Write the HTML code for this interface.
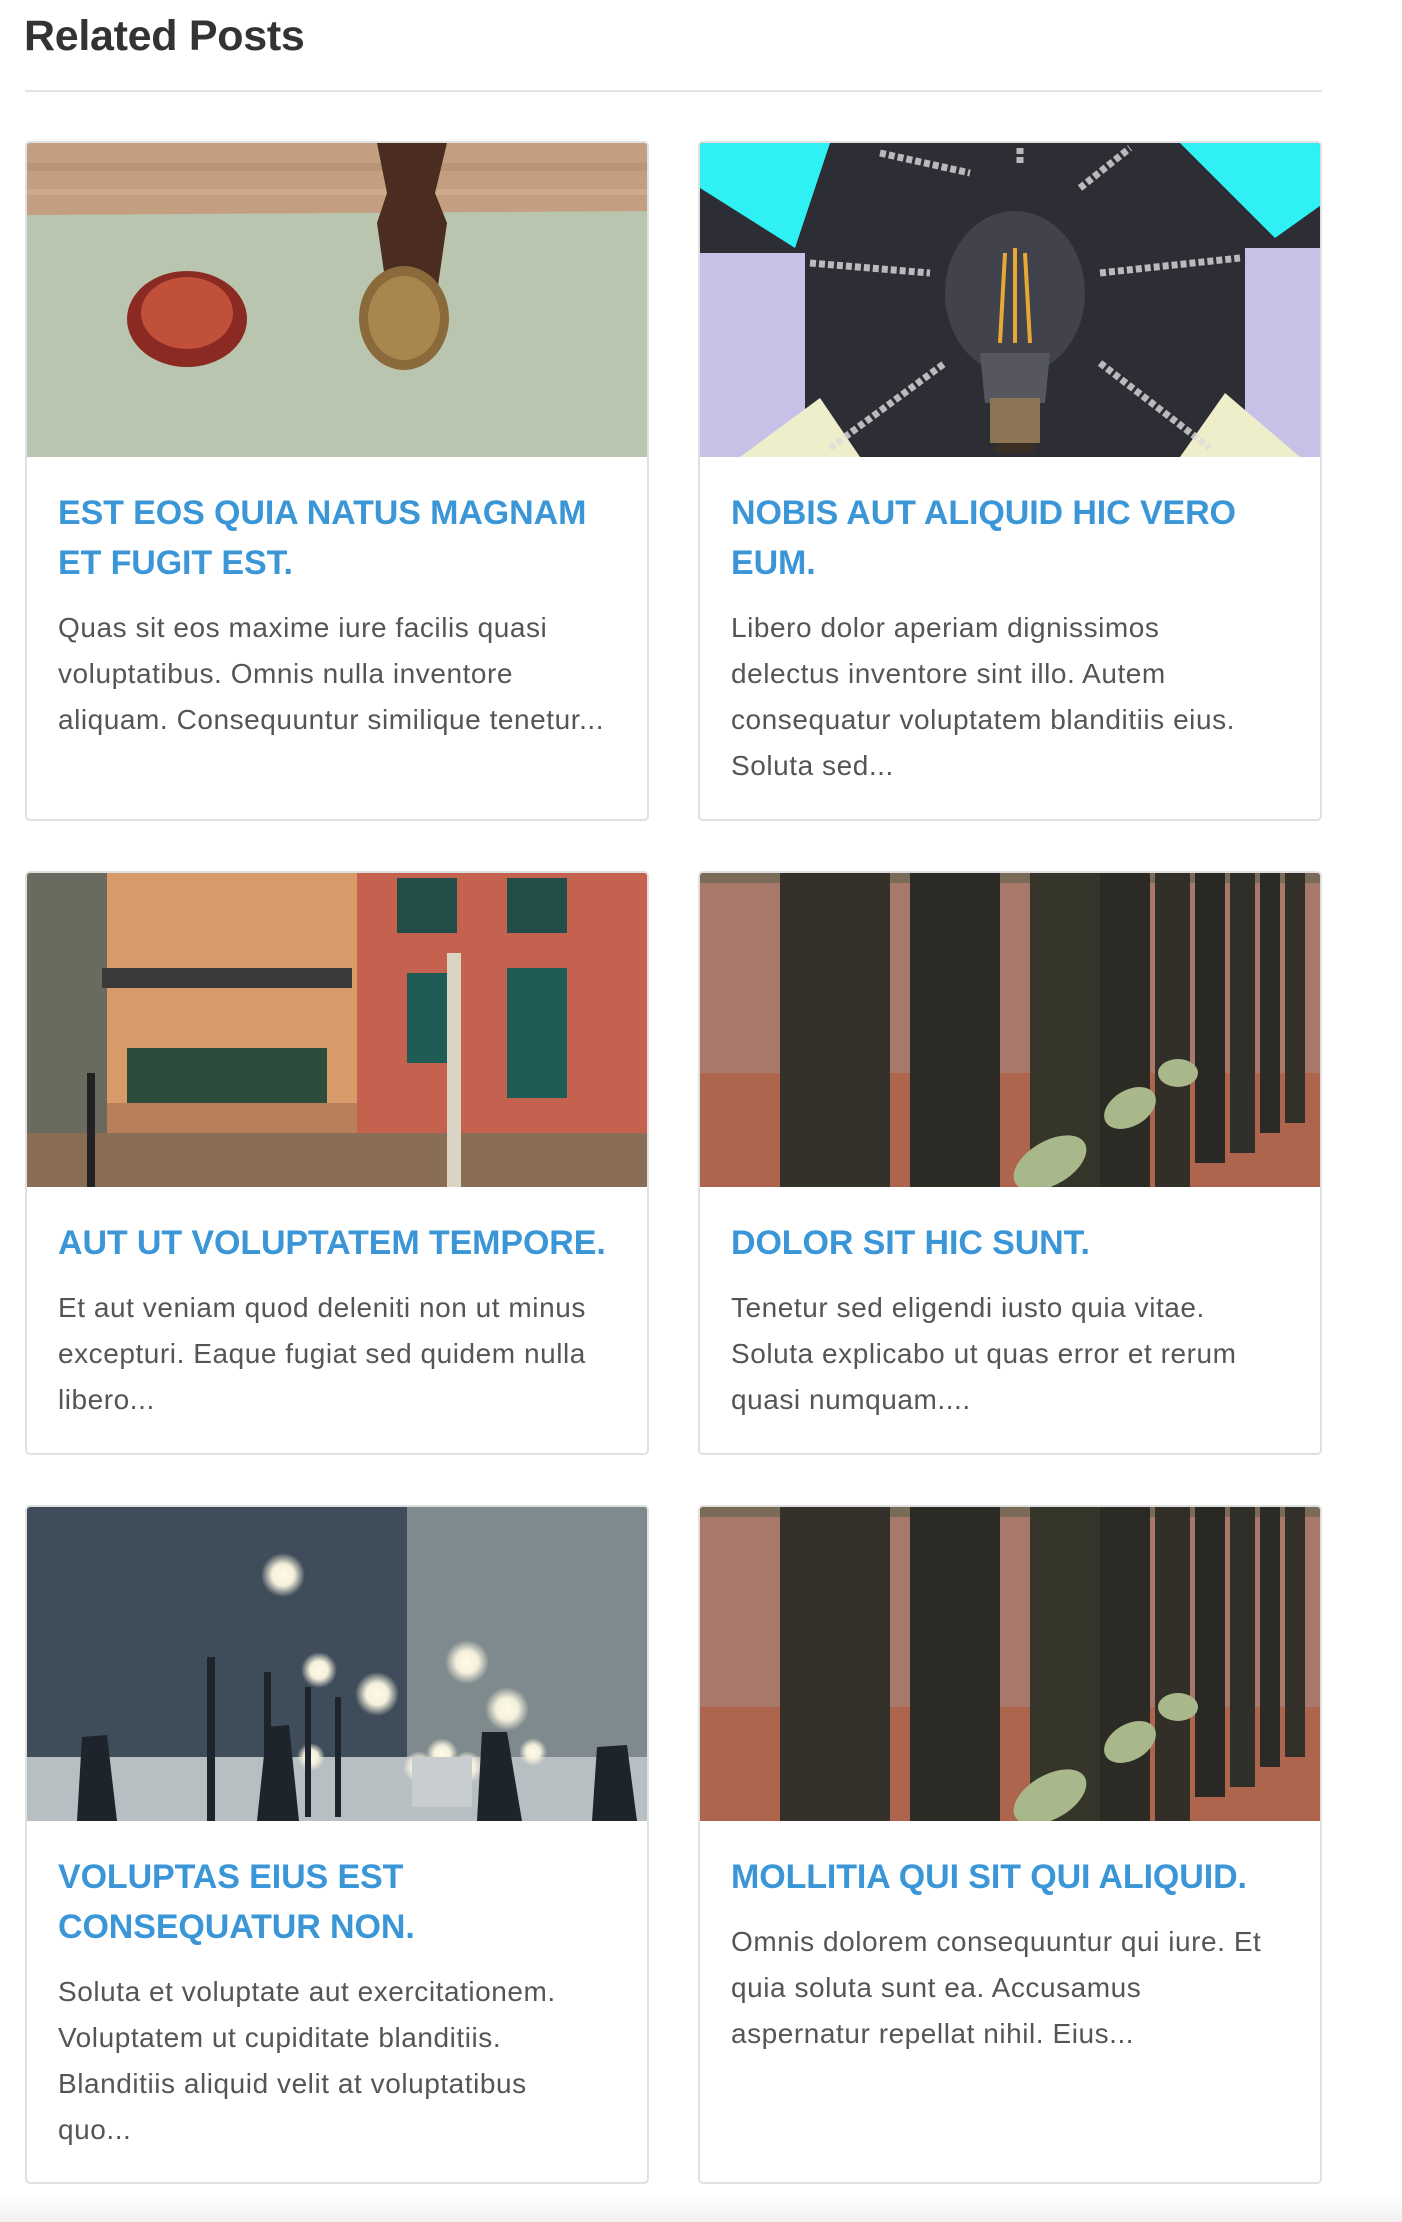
<!DOCTYPE html>
<html><head><meta charset="utf-8"><style>
*{box-sizing:border-box;margin:0;padding:0}
body{width:1402px;height:2222px;background:#fff;font-family:"Liberation Sans",sans-serif;position:relative;overflow:hidden}
h2{position:absolute;left:24px;top:12px;font-size:43px;font-weight:bold;color:#333;letter-spacing:-0.3px}
.hr{position:absolute;left:25px;top:90px;width:1297px;height:2px;background:#e3e3e3}
.card{position:absolute;width:624px;border:2px solid #e0e0e0;border-radius:5px;overflow:hidden;background:#fff}
.img{height:314px;position:relative;overflow:hidden}
.body{padding:31px 20px 30px 31px}
.t{color:#3a96d6;font-size:34px;font-weight:bold;line-height:50px;text-transform:uppercase;margin-bottom:17px;letter-spacing:-0.1px}
.p{color:#555;font-size:28px;line-height:46px;letter-spacing:0.55px;white-space:nowrap}
.foot{position:absolute;left:0;top:2195px;width:1402px;height:27px;background:linear-gradient(#fff,#f0f0f0)}
</style></head><body>
<h2>Related Posts</h2>
<div class="hr"></div>

<div class="card" style="left:25px;top:141px;height:680px">
<div class="img"><svg width="624" height="314">
<rect width="624" height="314" fill="#b8c3aa"/>
<rect width="624" height="72" fill="#c49e80"/>
<rect y="20" width="624" height="8" fill="#b08a6c" opacity=".5"/><rect y="46" width="624" height="6" fill="#d5b092" opacity=".6"/>
<path d="M0 72 L624 68 L624 314 L0 314Z" fill="#b9c5ae"/>
<ellipse cx="160" cy="176" rx="60" ry="48" fill="#8a2a22"/><ellipse cx="160" cy="170" rx="46" ry="36" fill="#c0503a"/>
<path d="M350 0 L420 0 L408 50 L420 80 L410 150 L360 150 L350 80 L360 50Z" fill="#4a2c20"/>
<ellipse cx="377" cy="175" rx="45" ry="52" fill="#8a6a3a"/><ellipse cx="377" cy="175" rx="36" ry="42" fill="#a9864d"/>
</svg></div>
<div class="body"><div class="t">Est eos quia natus magnam<br>et fugit est.</div>
<div class="p">Quas sit eos maxime iure facilis quasi<br>voluptatibus. Omnis nulla inventore<br>aliquam. Consequuntur similique tenetur...</div></div></div>

<div class="card" style="left:698px;top:141px;height:680px">
<div class="img"><svg width="624" height="314">
<rect width="624" height="314" fill="#2d2e35"/>
<path d="M0 0 L130 0 L95 105 L0 45Z" fill="#2ff0f2"/><path d="M480 0 L624 0 L624 60 L575 95Z" fill="#2ff0f2"/>
<rect x="0" y="110" width="105" height="210" fill="#c7c1e8"/><rect x="545" y="105" width="79" height="210" fill="#c7c1e8"/>
<path d="M40 314 L120 255 L160 314Z" fill="#efeecb"/><path d="M480 314 L525 250 L600 314Z" fill="#efeecb"/>
<g stroke="#ddd" stroke-width="7" stroke-dasharray="6 3" opacity=".8">
<line x1="110" y1="120" x2="230" y2="130"/><line x1="400" y1="130" x2="540" y2="115"/>
<line x1="130" y1="305" x2="245" y2="220"/><line x1="400" y1="220" x2="510" y2="305"/>
<line x1="180" y1="10" x2="270" y2="30"/><line x1="380" y1="45" x2="430" y2="5"/><line x1="320" y1="5" x2="320" y2="20"/>
</g>
<ellipse cx="315" cy="150" rx="70" ry="82" fill="#4a4b55" opacity=".7"/>
<path d="M280 210 L350 210 L345 260 L285 260Z" fill="#55565e"/>
<g stroke="#e7a933" stroke-width="4"><line x1="305" y1="110" x2="300" y2="200"/><line x1="315" y1="105" x2="315" y2="200"/><line x1="325" y1="110" x2="330" y2="200"/></g>
<rect x="290" y="255" width="50" height="45" fill="#8c7455"/><rect x="295" y="300" width="40" height="10" fill="#3a2e25"/>
</svg></div>
<div class="body"><div class="t">Nobis aut aliquid hic vero<br>eum.</div>
<div class="p">Libero dolor aperiam dignissimos<br>delectus inventore sint illo. Autem<br>consequatur voluptatem blanditiis eius.<br>Soluta sed...</div></div></div>

<div class="card" style="left:25px;top:871px;height:584px">
<div class="img"><svg width="624" height="314">
<rect width="624" height="314" fill="#c98b5d"/>
<rect x="0" width="80" height="314" fill="#6b6a5e"/>
<rect x="80" width="250" height="314" fill="#d89a68"/>
<rect x="330" width="294" height="314" fill="#c5624f"/>
<rect x="75" y="95" width="250" height="20" fill="#3a3a38"/>
<rect x="100" y="175" width="200" height="60" fill="#2c4c3c"/>
<rect x="370" y="5" width="60" height="55" fill="#224d48"/><rect x="480" y="5" width="60" height="55" fill="#224d48"/>
<rect x="380" y="100" width="40" height="90" fill="#1f5c55"/><rect x="480" y="95" width="60" height="130" fill="#1f5c55"/>
<rect x="80" y="230" width="250" height="30" fill="#b8805a"/>
<rect x="0" y="260" width="624" height="54" fill="#8a6d55"/>
<rect x="420" y="80" width="14" height="234" fill="#d9d4c4"/><rect x="60" y="200" width="8" height="114" fill="#222"/>
</svg></div>
<div class="body"><div class="t">Aut ut voluptatem tempore.</div>
<div class="p">Et aut veniam quod deleniti non ut minus<br>excepturi. Eaque fugiat sed quidem nulla<br>libero...</div></div></div>

<div class="card" style="left:698px;top:871px;height:584px">
<div class="img"><svg width="624" height="314">
<rect width="624" height="314" fill="#a8786a"/>
<rect y="200" width="624" height="114" fill="#b0583c" opacity=".6"/>
<rect width="624" height="10" fill="#7a6a58"/>
<rect x="80" width="110" height="314" fill="#34312a"/><rect x="210" width="90" height="314" fill="#2c2a25"/>
<rect x="330" width="70" height="314" fill="#35352a"/><rect x="400" width="50" height="314" fill="#2b2a24"/>
<rect x="455" width="35" height="314" fill="#312f28"/><rect x="495" width="30" height="290" fill="#2a2824"/><rect x="530" width="25" height="280" fill="#302e28"/><rect x="560" width="20" height="260" fill="#2b2a26"/><rect x="585" width="20" height="250" fill="#33302a"/>
<ellipse cx="350" cy="290" rx="40" ry="22" fill="#a9b88a" transform="rotate(-30 350 290)"/>
<ellipse cx="430" cy="235" rx="28" ry="18" fill="#a9b88a" transform="rotate(-30 430 235)"/>
<ellipse cx="478" cy="200" rx="20" ry="14" fill="#a9b88a"/>
</svg></div>
<div class="body"><div class="t">Dolor sit hic sunt.</div>
<div class="p">Tenetur sed eligendi iusto quia vitae.<br>Soluta explicabo ut quas error et rerum<br>quasi numquam....</div></div></div>

<div class="card" style="left:25px;top:1505px;height:679px">
<div class="img"><svg width="624" height="314">
<defs><radialGradient id="l"><stop offset="0" stop-color="#fffbe8"/><stop offset=".5" stop-color="#f4f0dc"/><stop offset="1" stop-color="#f4f0dc" stop-opacity="0"/></radialGradient></defs>
<rect width="624" height="314" fill="#3f4c5a"/>
<rect x="380" width="244" height="260" fill="#7e8a8d"/>
<rect y="250" width="624" height="64" fill="#b7bfc2"/>
<g fill="url(#l)"><circle cx="256" cy="68" r="22"/><circle cx="292" cy="163" r="18"/><circle cx="350" cy="187" r="22"/><circle cx="440" cy="155" r="22"/><circle cx="480" cy="202" r="22"/><circle cx="392" cy="260" r="16"/><circle cx="415" cy="247" r="16"/><circle cx="440" cy="260" r="16"/><circle cx="506" cy="245" r="14"/><circle cx="284" cy="250" r="14"/></g>
<rect x="385" y="250" width="60" height="50" fill="#c8cdd0"/>
<g fill="#1e242c"><rect x="180" y="150" width="8" height="190"/><rect x="237" y="165" width="7" height="160"/><rect x="278" y="180" width="6" height="130"/><rect x="308" y="190" width="6" height="120"/>
<path d="M55 230 L80 228 L90 314 L50 314Z"/><path d="M240 220 L262 218 L272 314 L230 314Z"/><path d="M455 225 L480 225 L495 314 L450 314Z"/><path d="M570 240 L600 238 L610 314 L565 314Z"/></g>
</svg></div>
<div class="body"><div class="t">Voluptas eius est<br>consequatur non.</div>
<div class="p">Soluta et voluptate aut exercitationem.<br>Voluptatem ut cupiditate blanditiis.<br>Blanditiis aliquid velit at voluptatibus<br>quo...</div></div></div>

<div class="card" style="left:698px;top:1505px;height:679px">
<div class="img"><svg width="624" height="314">
<rect width="624" height="314" fill="#a8786a"/>
<rect y="200" width="624" height="114" fill="#b0583c" opacity=".6"/>
<rect width="624" height="10" fill="#7a6a58"/>
<rect x="80" width="110" height="314" fill="#34312a"/><rect x="210" width="90" height="314" fill="#2c2a25"/>
<rect x="330" width="70" height="314" fill="#35352a"/><rect x="400" width="50" height="314" fill="#2b2a24"/>
<rect x="455" width="35" height="314" fill="#312f28"/><rect x="495" width="30" height="290" fill="#2a2824"/><rect x="530" width="25" height="280" fill="#302e28"/><rect x="560" width="20" height="260" fill="#2b2a26"/><rect x="585" width="20" height="250" fill="#33302a"/>
<ellipse cx="350" cy="290" rx="40" ry="22" fill="#a9b88a" transform="rotate(-30 350 290)"/>
<ellipse cx="430" cy="235" rx="28" ry="18" fill="#a9b88a" transform="rotate(-30 430 235)"/>
<ellipse cx="478" cy="200" rx="20" ry="14" fill="#a9b88a"/>
</svg></div>
<div class="body"><div class="t">Mollitia qui sit qui aliquid.</div>
<div class="p">Omnis dolorem consequuntur qui iure. Et<br>quia soluta sunt ea. Accusamus<br>aspernatur repellat nihil. Eius...</div></div></div>

<div class="foot"></div>
</body></html>
